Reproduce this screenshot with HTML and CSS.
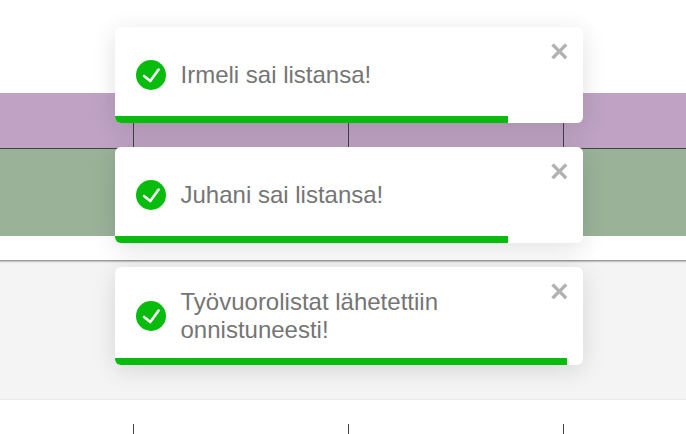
FILE: index.html
```html
<!DOCTYPE html>
<html lang="fi">
<head>
<meta charset="utf-8">
<title>Työvuorolistat</title>
<link rel="stylesheet" href="styles.css">
</head>
<body>
<svg class="defs" aria-hidden="true">
  <symbol id="check" viewBox="0 0 30 30"><circle cx="15" cy="15" r="15" fill="#07bc0c"/><path d="M8 16l6.3 5L22.6 9.6" fill="none" stroke="#fff" stroke-width="2.6" stroke-linecap="round" stroke-linejoin="round"/></symbol>
  <symbol id="close" viewBox="0 0 14 16"><path fill-rule="evenodd" stroke="#000" stroke-width=".2" stroke-linejoin="round" d="M7.71 8.23l3.75 3.75-1.48 1.48-3.75-3.75-3.75 3.75L1 11.98l3.75-3.75L1 4.48 2.48 3l3.75 3.75L9.98 3l1.48 1.48-3.75 3.75z"/></symbol>
</svg>
<main class="page">
  <div class="spacer"></div>
  <div class="row row-purple"><i></i><i></i><i></i><i></i></div>
  <div class="row row-green"></div>
  <div class="gap"></div>
  <div class="panel"></div>
  <div class="row row-next"><i></i><i></i><i></i><i></i></div>
</main>
<section class="toasts">
  <div class="toast">
    <svg class="icon"><use href="#check"/></svg>
    <div class="message">Irmeli sai listansa!</div>
    <button class="close" aria-label="Sulje"><svg><use href="#close"/></svg></button>
    <div class="progress" style="width:84%"></div>
  </div>
  <div class="toast">
    <svg class="icon"><use href="#check"/></svg>
    <div class="message">Juhani sai listansa!</div>
    <button class="close" aria-label="Sulje"><svg><use href="#close"/></svg></button>
    <div class="progress" style="width:84%"></div>
  </div>
  <div class="toast">
    <svg class="icon"><use href="#check"/></svg>
    <div class="message">Työvuorolistat lähetettiin onnistuneesti!</div>
    <button class="close" aria-label="Sulje"><svg><use href="#close"/></svg></button>
    <div class="progress" style="width:96.6%"></div>
  </div>
</section>
</body>
</html>
```
FILE: styles.css
```css
* { box-sizing: border-box; }
body {
  margin: 0;
  height: 434px;
  position: relative;
  overflow: hidden;
  background: #fff;
  font-family: "Liberation Sans", Arial, sans-serif;
}
.defs { display: none; }
.page { display: flex; flex-direction: column; height: 434px; }
.spacer { height: 93px; }
.row { display: grid; grid-template-columns: 134px 215px 215px 1fr; }
.row i { border-right: 1px solid #424242; }
.row i:last-child { border-right: 0; }
.row-purple { height: 56px; background: #bfa2c4; border-bottom: 1px solid #424242; }
.row-green { height: 87px; background: #99b298; }
.gap { height: 24px; }
.panel {
  height: 140px;
  background: #f4f4f4;
  border-top: 1px solid #9c9c9c;
  border-bottom: 1px solid #ebebeb;
  box-shadow: inset 0 1px 0 #c6c6c6, inset 0 2px 0 #e9e9e9;
}
.row-next { height: 34px; padding-top: 24px; }
.toasts {
  position: absolute;
  top: 27px;
  left: 115px;
  width: 468px;
  display: flex;
  flex-direction: column;
  gap: 24px;
}
.toast {
  position: relative;
  display: flex;
  align-items: center;
  min-height: 96px;
  padding: 21px 54px 21px 21px;
  border-radius: 6px;
  overflow: hidden;
  background: #fff;
  color: #757575;
  box-shadow: 0 5px 24px rgba(0, 0, 0, .12);
}
.icon { flex: none; width: 30px; height: 30px; margin-right: 14.5px; }
.message { flex: 1; font-size: 24px; line-height: 28px; }
.close {
  position: absolute;
  top: 12px;
  right: 12px;
  padding: 0;
  border: 0;
  background: none;
  opacity: .3;
}
.close svg { display: block; width: 21px; height: 24px; fill: #000; }
.progress {
  position: absolute;
  left: 0;
  bottom: 0;
  height: 7px;
  background: #07bc0c;
}
```
